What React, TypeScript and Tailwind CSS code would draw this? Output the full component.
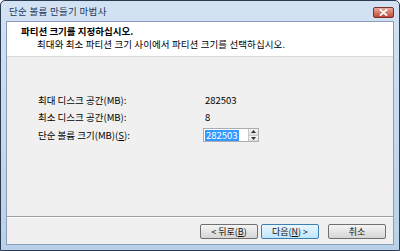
import React from "react";

const font = { fontFamily: '"Noto Sans CJK KR", "Noto Sans", sans-serif' };

function Btn({ children, primary }: { children: React.ReactNode; primary?: boolean }) {
  return (
    <div
      className={
        "h-[15px] w-[58px] flex items-center justify-center rounded-[2px] border text-[9px] leading-none text-[#111] " +
        (primary
          ? "border-[#3c7fb1] bg-gradient-to-b from-[#eaf6fd] to-[#bee6fd]"
          : "border-[#707070] bg-gradient-to-b from-[#f4f4f4] to-[#d6d6d6]")
      }
    >
      {children}
    </div>
  );
}

export default function App() {
  return (
    <div className="w-[400px] h-[251px] overflow-hidden bg-white" style={font}>
      <div className="w-[400px] h-[251px] flex flex-col border border-[#2c3b4f] rounded-t-[5px] bg-gradient-to-b from-[#d3e2f3] to-[#b9d1ea]">
        {/* title bar */}
        <div className="h-[20px] flex items-center justify-between pl-[8px] pr-[5px] shrink-0">
          <span className="text-[9.5px] tracking-[0.3px] text-[#1e395b] leading-none mt-[2px]">단순 볼륨 만들기 마법사</span>
          <div className="w-[21px] h-[11px] mt-[3px] rounded-[2px] border border-[#7a2f2a] bg-gradient-to-b from-[#e9a99c] to-[#c1473a] flex items-center justify-center">
            <svg width="9" height="7" viewBox="0 0 9 7">
              <path d="M1.5 0.8 L7.5 6.2 M7.5 0.8 L1.5 6.2" stroke="#ffffff" strokeWidth="1.8" strokeLinecap="round" />
            </svg>
          </div>
        </div>
        {/* client */}
        <div className="flex-1 mx-[5px] mb-[5px] flex flex-col border border-[#8a9db6] bg-[#f0f0f0]">
          <div className="h-[35px] bg-white border-b border-[#d8d8d8] pl-[14px] pt-[2px] shrink-0">
            <div className="text-[9.5px] font-bold leading-[14px] text-black">파티션 크기를 지정하십시오.</div>
            <div className="text-[9.5px] tracking-[0.1px] leading-[14px] -mt-[1px] text-black pl-[16px]">최대와 최소 파티션 크기 사이에서 파티션 크기를 선택하십시오.</div>
          </div>
          <div className="flex-1 pt-[34px] pl-[31px] text-[9.5px] text-black">
            <div className="h-[18px] flex items-center">
              <span className="w-[167px]">최대 디스크 공간(MB):</span>
              <span>282503</span>
            </div>
            <div className="h-[17px] flex items-center">
              <span className="w-[167px]">최소 디스크 공간(MB):</span>
              <span>8</span>
            </div>
            <div className="h-[18px] flex items-center">
              <span className="w-[165px]">
                단순 볼륨 크기(MB)(<span className="underline">S</span>):
              </span>
              <div className="flex h-[14px] w-[56px] border border-[#abadb3] bg-white">
                <div className="flex-1 flex items-center pl-[1px]">
                  <span className="bg-[#3399ff] text-white leading-[11px] px-[1px]">282503</span>
                </div>
                <div className="w-[10px] flex flex-col border-l border-[#c8c8c8]">
                  <div className="flex-1 flex items-center justify-center bg-gradient-to-b from-[#f6f6f6] to-[#dedede] border-b border-[#c8c8c8]">
                    <svg width="5" height="3" viewBox="0 0 5 3"><path d="M0 3 L2.5 0 L5 3 Z" fill="#333" /></svg>
                  </div>
                  <div className="flex-1 flex items-center justify-center bg-gradient-to-b from-[#f6f6f6] to-[#dedede]">
                    <svg width="5" height="3" viewBox="0 0 5 3"><path d="M0 0 L2.5 3 L5 0 Z" fill="#333" /></svg>
                  </div>
                </div>
              </div>
            </div>
          </div>
          <div className="h-[2px] border-t border-[#a0a0a0] border-b border-b-white shrink-0" />
          <div className="h-[26px] flex items-center justify-end pr-[7px] pt-[1px] shrink-0">
            <Btn>&lt; 뒤로(<span className="underline">B</span>)</Btn>
            <div className="w-[3px]" />
            <Btn primary>다음(<span className="underline">N</span>) &gt;</Btn>
            <div className="w-[9px]" />
            <Btn>취소</Btn>
          </div>
        </div>
      </div>
    </div>
  );
}
